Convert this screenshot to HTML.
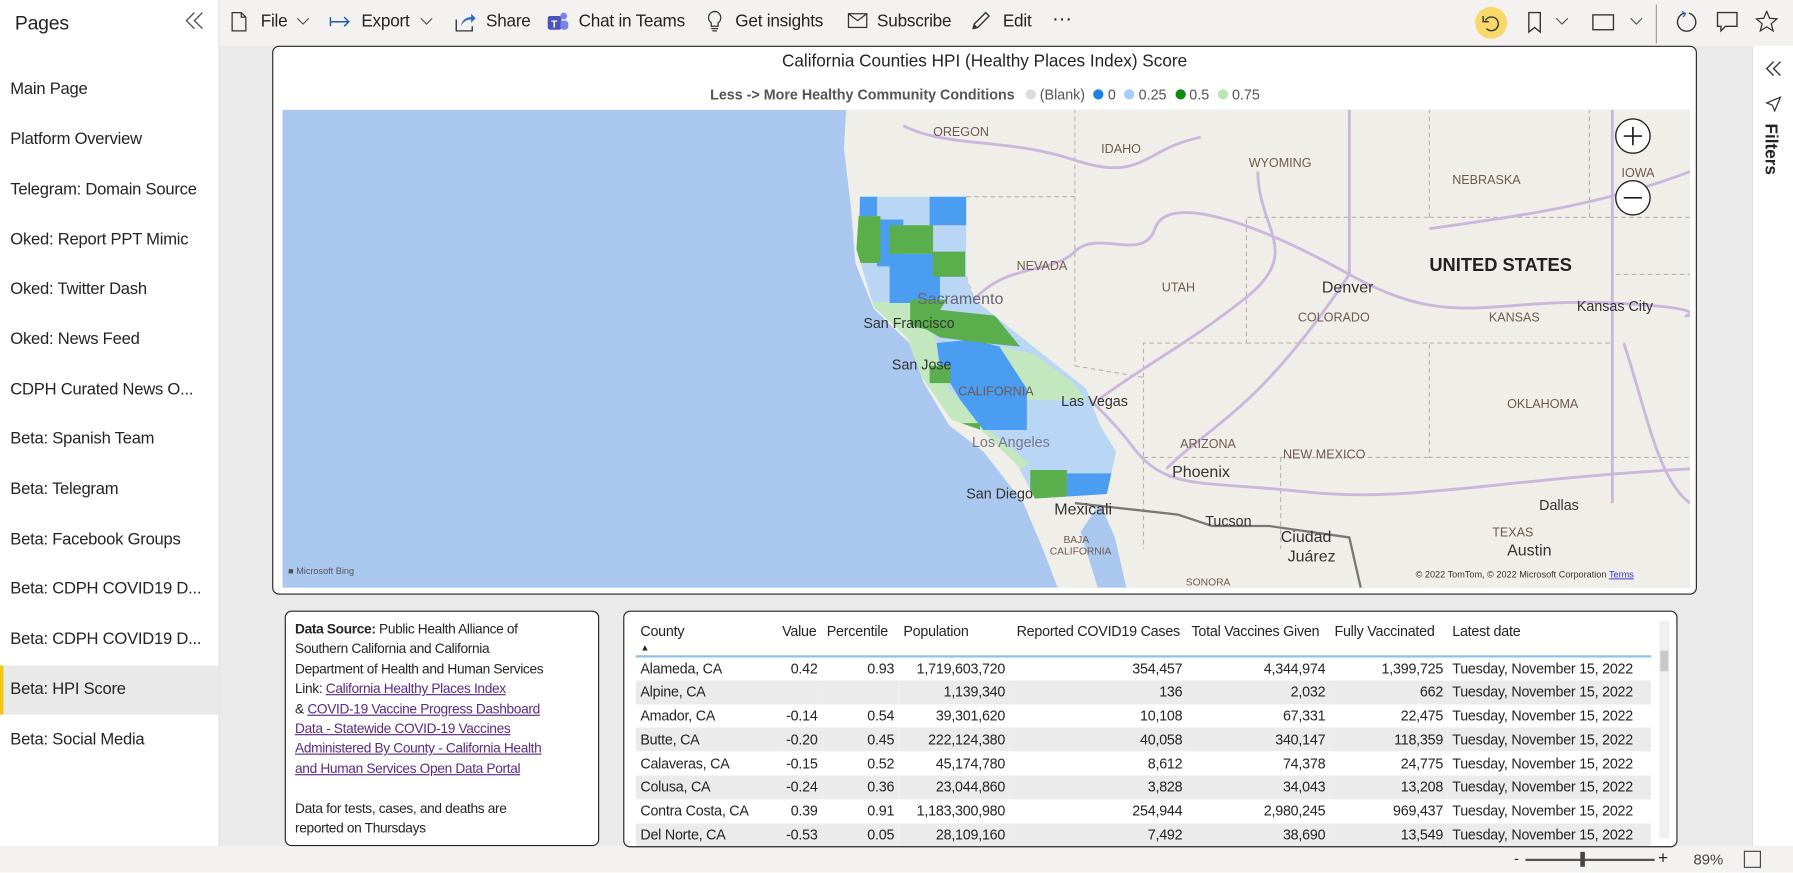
<!DOCTYPE html>
<html><head><meta charset="utf-8">
<style>
*{box-sizing:border-box;margin:0;padding:0}
html,body{width:1793px;height:873px;overflow:hidden;background:#fff}
#w{position:absolute;left:0;top:0;width:1568px;height:763px;transform:scale(1.14349);transform-origin:0 0;font-family:"Liberation Sans",sans-serif;color:#252423;background:#eaeaea}
.abs{position:absolute}
#left{left:0;top:0;width:192px;height:740px;background:#fff;border-right:1px solid #e1dfdd}
#left .it{position:absolute;left:9px;font-size:14.5px;color:#252423;letter-spacing:-0.2px;white-space:nowrap}
#top{left:192px;top:0;width:1376px;height:40px;background:#f3f2f1}
.tb{position:absolute;top:10px;font-size:15px;color:#252423;white-space:nowrap;letter-spacing:-0.2px}
#right{left:1532px;top:40px;width:36px;height:700px;background:#fff;border-left:1px solid #e1dfdd}
#bottom{left:0;top:740px;width:1568px;height:23px;background:#f3f2f1}
.box{position:absolute;background:#fff;border:1px solid #252423;border-radius:6px}
table{border-collapse:collapse;font-size:12.5px;letter-spacing:-0.2px;table-layout:fixed}
td,th{height:20.8px;padding:0 4px;white-space:nowrap;font-weight:normal;overflow:hidden;line-height:14px}
th{text-align:left;height:26px;vertical-align:top;padding-top:2px;line-height:13px}
td{text-align:right}
td:first-child,td:last-child{text-align:left}
tr.g td{background:#ebebeb}
a{color:#5b2a86;text-decoration:underline}
</style></head><body><div id="w">

<div id="left" class="abs">
 <div class="it" style="left:13px;top:11px;font-size:17px">Pages</div>
 <svg class="abs" style="left:161px;top:10px" width="18" height="16" viewBox="0 0 18 16"><path d="M9 1 2 8l7 7M16 1 9 8l7 7" fill="none" stroke="#555" stroke-width="1.2"/></svg>
 <div class="it" style="top:70px">Main Page</div>
 <div class="it" style="top:114px">Platform Overview</div>
 <div class="it" style="top:158px">Telegram: Domain Source</div>
 <div class="it" style="top:202px">Oked: Report PPT Mimic</div>
 <div class="it" style="top:245px">Oked: Twitter Dash</div>
 <div class="it" style="top:289px">Oked: News Feed</div>
 <div class="it" style="top:333px">CDPH Curated News O...</div>
 <div class="it" style="top:376px">Beta: Spanish Team</div>
 <div class="it" style="top:420px">Beta: Telegram</div>
 <div class="it" style="top:464px">Beta: Facebook Groups</div>
 <div class="it" style="top:507px">Beta: CDPH COVID19 D...</div>
 <div class="it" style="top:551px">Beta: CDPH COVID19 D...</div>
 <div class="abs" style="left:0;top:582px;width:191px;height:43px;background:#e9e9e9"></div>
 <div class="abs" style="left:0;top:582px;width:3px;height:43px;background:#f2c811"></div>
 <div class="it" style="top:595px">Beta: HPI Score</div>
 <div class="it" style="top:639px">Beta: Social Media</div>
</div>

<div id="top" class="abs">
 <svg class="abs" style="left:10px;top:10px" width="14" height="18"><path d="M1 1h8l4 4v12H1z M9 1v4h4" fill="none" stroke="#333" stroke-width="1.1"/></svg>
 <div class="tb" style="left:36px">File</div>
 <svg class="abs" style="left:67px;top:15px" width="12" height="8"><path d="M1 1l5 5 5-5" fill="none" stroke="#555"/></svg>
 <svg class="abs" style="left:96px;top:12px" width="20" height="14"><path d="M1 3v8M1 7h16M13 3l4 4-4 4" fill="none" stroke="#1f5fa8" stroke-width="1.3"/></svg>
 <div class="tb" style="left:124px">Export</div>
 <svg class="abs" style="left:175px;top:15px" width="12" height="8"><path d="M1 1l5 5 5-5" fill="none" stroke="#555"/></svg>
 <svg class="abs" style="left:205px;top:9px" width="20" height="20"><path d="M2 8v10h14v-4" fill="none" stroke="#333" stroke-width="1.2"/><path d="M6 14c1-6 5-8 9-8V3l4 4-4 4V8c-4 0-7 2-9 6z" fill="#2b6cc4"/></svg>
 <div class="tb" style="left:233px">Share</div>
 <svg class="abs" style="left:286px;top:9px" width="20" height="20"><rect x="1" y="5" width="12" height="12" rx="2" fill="#4b53bc"/><circle cx="15" cy="5" r="3" fill="#7b83eb"/><rect x="12" y="9" width="7" height="8" rx="3" fill="#7b83eb"/><text x="4" y="15" font-size="9" fill="#fff" font-family="Liberation Sans" font-weight="bold">T</text></svg>
 <div class="tb" style="left:314px">Chat in Teams</div>
 <svg class="abs" style="left:426px;top:9px" width="14" height="20"><path d="M7 1a5.5 5.5 0 0 0-3 10v3h6v-3A5.5 5.5 0 0 0 7 1zM4 16h6M5 18h4" fill="none" stroke="#333" stroke-width="1.1"/></svg>
 <div class="tb" style="left:451px">Get insights</div>
 <svg class="abs" style="left:549px;top:11px" width="18" height="14"><rect x="1" y="1" width="16" height="12" fill="none" stroke="#333" stroke-width="1.1"/><path d="M1 1l8 6 8-6" fill="none" stroke="#333" stroke-width="1.1"/></svg>
 <div class="tb" style="left:575px">Subscribe</div>
 <svg class="abs" style="left:657px;top:9px" width="18" height="18"><path d="M2 16l1-4L13 2l3 3L6 15z" fill="none" stroke="#333" stroke-width="1.2"/><path d="M2 16l1-4 3 3z" fill="#333"/></svg>
 <div class="tb" style="left:685px">Edit</div>
 <div class="tb" style="left:728px;top:6px;font-size:18px">···</div>
 <div class="abs" style="left:1098px;top:6px;width:28px;height:28px;border-radius:50%;background:#f8d86b"></div>
 <svg class="abs" style="left:1103px;top:11px" width="18" height="18"><path d="M4 7a6 6 0 1 1 1 7" fill="none" stroke="#333" stroke-width="1.2"/><path d="M2 3v5h5" fill="none" stroke="#333" stroke-width="1.2"/></svg>
 <svg class="abs" style="left:1144px;top:10px" width="12" height="20"><path d="M1 1h10v17l-5-4-5 4z" fill="none" stroke="#333" stroke-width="1.2"/></svg>
 <svg class="abs" style="left:1168px;top:15px" width="12" height="8"><path d="M1 1l5 5 5-5" fill="none" stroke="#555"/></svg>
 <svg class="abs" style="left:1200px;top:12px" width="20" height="16"><rect x="1" y="1" width="18" height="13" fill="none" stroke="#333" stroke-width="1.2"/></svg>
 <svg class="abs" style="left:1233px;top:15px" width="12" height="8"><path d="M1 1l5 5 5-5" fill="none" stroke="#555"/></svg>
 <div class="abs" style="left:1256px;top:4px;width:1px;height:34px;background:#999"></div>
 <svg class="abs" style="left:1273px;top:9px" width="20" height="20"><path d="M8 2.5a8 8 0 1 0 4 0" fill="none" stroke="#333" stroke-width="1.2"/><path d="M6 1l3 2-2 3" fill="none" stroke="#2b6cc4" stroke-width="1.2"/></svg>
 <svg class="abs" style="left:1309px;top:10px" width="20" height="20"><path d="M1 1h17v12H8l-4 4v-4H1z" fill="none" stroke="#333" stroke-width="1.2"/></svg>
 <svg class="abs" style="left:1343px;top:9px" width="20" height="20"><path d="M10 1l2.6 6 6.4.5-5 4.2 1.6 6.3L10 14.5 4.4 18l1.6-6.3-5-4.2 6.4-.5z" fill="none" stroke="#333" stroke-width="1.1"/></svg>
</div>

<div id="right" class="abs">
 <svg class="abs" style="left:10px;top:13px" width="16" height="14"><path d="M8 1 2 7l6 6M14 1 8 7l6 6" fill="none" stroke="#333" stroke-width="1.2"/></svg>
 <svg class="abs" style="left:11px;top:44px" width="14" height="14"><path d="M13 1 1 6l5 2 2 5z" fill="none" stroke="#333" stroke-width="1.1"/></svg>
 <div class="abs" style="left:24px;top:68px;transform:rotate(90deg);transform-origin:0 0;font-size:15px;font-weight:bold;color:#252423">Filters</div>
</div>

<div id="bottom" class="abs">
 <div class="abs" style="left:1324px;top:3px;font-size:13px">-</div>
 <div class="abs" style="left:1334px;top:11px;width:113px;height:2px;background:#555"></div>
 <div class="abs" style="left:1382px;top:5px;width:4px;height:13px;background:#444"></div>
 <div class="abs" style="left:1450px;top:2px;font-size:15px">+</div>
 <div class="abs" style="left:1481px;top:4px;font-size:13px;color:#444">89%</div>
 <div class="abs" style="left:1525px;top:4px;width:15px;height:15px;border:1.5px solid #444"></div>
</div>

<div class="box" style="left:238px;top:40px;width:1246px;height:480px"></div>
<div class="abs" style="left:238px;top:45px;width:1246px;text-align:center;font-size:15px;color:#252423">California Counties HPI (Healthy Places Index) Score</div>
<div class="abs" style="left:621px;top:76px;font-size:12.5px;color:#555;white-space:nowrap"><b>Less -&gt; More Healthy Community Conditions</b>
 <span style="display:inline-block;width:9px;height:9px;border-radius:50%;background:#ddd;margin-left:6px"></span> (Blank)
 <span style="display:inline-block;width:9px;height:9px;border-radius:50%;background:#1a82e8;margin-left:4px"></span> 0
 <span style="display:inline-block;width:9px;height:9px;border-radius:50%;background:#a5cdf7;margin-left:4px"></span> 0.25
 <span style="display:inline-block;width:9px;height:9px;border-radius:50%;background:#118a11;margin-left:4px"></span> 0.5
 <span style="display:inline-block;width:9px;height:9px;border-radius:50%;background:#b8e6b4;margin-left:4px"></span> 0.75</div>

<svg class="abs" style="left:247px;top:96px" width="1231" height="418" viewBox="247 96 1231 418" font-family="Liberation Sans">
 <defs><clipPath id="ca"><path d="M752 172H845V242L852 262L950 340L962 372L976 395L968 432L905 436L890 407L858 376L832 367L806 329L793 295L764 268L749 218Z"/></clipPath></defs>
 <rect x="247" y="96" width="1231" height="418" fill="#aac7ef"/>
 <path d="M740 96H1478V514H985L975 470L962 440L945 465L960 514H925L912 480L895 440L860 395L830 372L808 335L795 300L764 270L748 230L744 180L738 130Z" fill="#efeee8"/>
 <g fill="none" stroke="#b9b3ad" stroke-width="1" stroke-dasharray="4 3">
  <path d="M845 172H940V96M940 172V320M845 242 852 262M940 320 1000 330V480M1000 330V300H1090V190H1250M1090 300H1250V400H1478M1250 190V96M1250 190H1390V96M1250 300H1410M1000 400H1250M1120 400V480M1390 190H1478M1410 300V240H1478"/>
 </g>
 <g fill="none" stroke="#cbb7dc" stroke-width="2.5">
  <path d="M852 262C880 230 920 240 940 220S1000 230 1010 200 1090 190 1180 240 1300 260 1410 265 1460 280 1478 275"/>
  <path d="M820 250C900 300 960 350 990 390S1050 420 1140 430 1300 420 1478 410"/>
  <path d="M1020 410C1060 370 1100 360 1180 240M1180 240V96M1250 200C1320 190 1400 180 1478 150"/>
  <path d="M960 350C1000 320 1040 300 1090 260S1100 200 1100 150"/>
  <path d="M1410 96V440M1420 300C1440 360 1450 420 1478 440"/>
  <path d="M790 110C830 130 880 120 940 140S1000 130 1050 120"/>
 </g>
 <path d="M940 440L1030 450 1060 460H1110L1180 470 1190 514" fill="none" stroke="#777" stroke-width="2"/>
 <g clip-path="url(#ca)">
  <rect x="740" y="160" width="250" height="290" fill="#b9d6f5"/>
  <path d="M755 265L802 262 820 300 830 340 860 372 900 405 880 420 840 395 800 340 775 300Z" fill="#c3e8c0"/>
  <path d="M874 303L905 310 939 335 950 350H898Z" fill="#c3e8c0"/>
  <path d="M752 172H767V189H752ZM813 172H845V197H813Z" fill="#4a9df0"/>
  <path d="M767 192H790V233H767ZM778 222H822V265H778Z" fill="#4a9df0"/>
  <path d="M819 300L850 297 874 303 898 340V376H860L840 350 822 320Z" fill="#4a9df0"/>
  <path d="M933 414H976V436H933Z" fill="#4a9df0"/>
  <path d="M749 189H770V230H749ZM778 197H816V222H778ZM816 220H844V242H816Z" fill="#5aae4c"/>
  <path d="M796 262H828L822 271 870 276 892 303 860 300 822 295 810 288 796 285Z" fill="#5aae4c"/>
  <path d="M813 320H831V335H813ZM831 370H857V388H831ZM901 411H933V436H901Z" fill="#5aae4c"/>
 </g>
 <g fill="#6e5a52" font-size="11">
  <text x="816" y="119">OREGON</text><text x="963" y="134">IDAHO</text><text x="1092" y="146">WYOMING</text>
  <text x="1270" y="161">NEBRASKA</text><text x="1418" y="155">IOWA</text><text x="889" y="236">NEVADA</text>
  <text x="1016" y="255">UTAH</text><text x="1135" y="281">COLORADO</text><text x="1302" y="281">KANSAS</text>
  <text x="838" y="346">CALIFORNIA</text><text x="1032" y="392">ARIZONA</text><text x="1122" y="401">NEW MEXICO</text>
  <text x="1318" y="357">OKLAHOMA</text><text x="1305" y="469">TEXAS</text><text x="930" y="475" font-size="9">BAJA</text><text x="918" y="485" font-size="9">CALIFORNIA</text><text x="1037" y="512" font-size="9">SONORA</text>
 </g>
 <text x="1250" y="237" font-size="16" font-weight="bold" fill="#222">UNITED STATES</text>
 <g fill="#333" font-size="12.5">
  <text x="1156" y="256" font-size="14">Denver</text><text x="1379" y="272">Kansas City</text><text x="802" y="266" fill="#667" font-size="14">Sacramento</text>
  <text x="755" y="287">San Francisco</text><text x="780" y="323">San Jose</text><text x="928" y="355">Las Vegas</text>
  <text x="850" y="391" fill="#778">Los Angeles</text><text x="1025" y="417" font-size="14">Phoenix</text><text x="845" y="436">San Diego</text>
  <text x="922" y="450" font-size="14">Mexicali</text><text x="1054" y="460">Tucson</text><text x="1120" y="474" font-size="14">Ciudad</text><text x="1126" y="491" font-size="14">Juárez</text>
  <text x="1346" y="446">Dallas</text><text x="1318" y="486" font-size="14">Austin</text>
 </g>
 <g fill="#fff" stroke="#222" stroke-width="1.2">
  <circle cx="1428" cy="119" r="15"/><circle cx="1428" cy="173" r="15"/>
 </g>
 <path d="M1420 119h16M1428 111v16M1420 173h16" stroke="#222" stroke-width="1.5"/>
 <text x="252" y="502" font-size="8" fill="#555">■ Microsoft Bing</text>
 <text x="1238" y="505" font-size="8" fill="#333">© 2022 TomTom, © 2022 Microsoft Corporation <tspan fill="#33c" text-decoration="underline">Terms</tspan></text>
</svg>

<div class="box" style="left:249px;top:534px;width:275px;height:206px"></div>
<div class="abs" style="left:258px;top:542px;width:262px;font-size:12px;line-height:17.4px;letter-spacing:-0.3px;color:#252423;white-space:nowrap">
<b>Data Source:</b> Public Health Alliance of<br>Southern California and California<br>Department of Health and Human Services<br>Link: <a>California Healthy Places Index</a><br>&amp; <a>COVID-19 Vaccine Progress Dashboard</a><br><a>Data - Statewide COVID-19 Vaccines</a><br><a>Administered By County - California Health</a><br><a>and Human Services Open Data Portal</a><br><br>Data for tests, cases, and deaths are<br>reported on Thursdays</div>

<div class="box" style="left:545px;top:534px;width:922px;height:207px;overflow:hidden">
 <table class="abs" style="left:10px;top:9px;width:888px">
  <colgroup><col style="width:124px"><col style="width:39px"><col style="width:67px"><col style="width:97px"><col style="width:155px"><col style="width:125px"><col style="width:103px"><col style="width:178px"></colgroup>
  <tr style="border-bottom:2px solid #8fc0ec"><th>County<br><span style="font-size:8px">▲</span></th><th>Value</th><th>Percentile</th><th>Population</th><th style="padding-left:6px">Reported COVID19 Cases</th><th>Total Vaccines Given</th><th>Fully Vaccinated</th><th>Latest date</th></tr>
  <tr><td>Alameda, CA</td><td>0.42</td><td>0.93</td><td>1,719,603,720</td><td>354,457</td><td>4,344,974</td><td>1,399,725</td><td>Tuesday, November 15, 2022</td></tr>
  <tr class="g"><td>Alpine, CA</td><td></td><td></td><td>1,139,340</td><td>136</td><td>2,032</td><td>662</td><td>Tuesday, November 15, 2022</td></tr>
  <tr><td>Amador, CA</td><td>-0.14</td><td>0.54</td><td>39,301,620</td><td>10,108</td><td>67,331</td><td>22,475</td><td>Tuesday, November 15, 2022</td></tr>
  <tr class="g"><td>Butte, CA</td><td>-0.20</td><td>0.45</td><td>222,124,380</td><td>40,058</td><td>340,147</td><td>118,359</td><td>Tuesday, November 15, 2022</td></tr>
  <tr><td>Calaveras, CA</td><td>-0.15</td><td>0.52</td><td>45,174,780</td><td>8,612</td><td>74,378</td><td>24,775</td><td>Tuesday, November 15, 2022</td></tr>
  <tr class="g"><td>Colusa, CA</td><td>-0.24</td><td>0.36</td><td>23,044,860</td><td>3,828</td><td>34,043</td><td>13,208</td><td>Tuesday, November 15, 2022</td></tr>
  <tr><td>Contra Costa, CA</td><td>0.39</td><td>0.91</td><td>1,183,300,980</td><td>254,944</td><td>2,980,245</td><td>969,437</td><td>Tuesday, November 15, 2022</td></tr>
  <tr class="g"><td>Del Norte, CA</td><td>-0.53</td><td>0.05</td><td>28,109,160</td><td>7,492</td><td>38,690</td><td>13,549</td><td>Tuesday, November 15, 2022</td></tr>
 </table>
 <div class="abs" style="left:905px;top:8px;width:9px;height:190px;background:#f0f0f0"></div>
 <div class="abs" style="left:906px;top:34px;width:7px;height:18px;background:#c8c8c8"></div>
</div>

</div></body></html>
